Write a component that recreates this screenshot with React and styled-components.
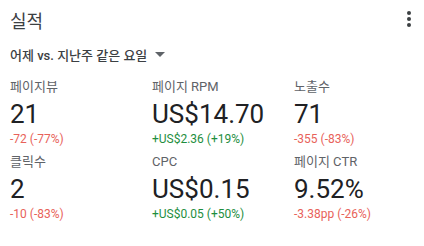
import { createGlobalStyle, styled } from "styled-components";

const GlobalStyle = createGlobalStyle`
    body {
        margin: 0;
        background: #fff;
        font-family: Roboto, "Noto Sans CJK KR", sans-serif;
    }
`

const Card = styled.div`
    width: 424px;
    height: 246px;
    box-sizing: border-box;
    padding: 7px 10px 0 10px;
    background: #fff;
`
const Header = styled.div`
    display: flex;
    justify-content: space-between;
    align-items: center;
    height: 26px;
`
const Title = styled.h2`
    margin: 0;
    font-size: 18px;
    font-weight: 400;
    color: #3c4043;
`
const MoreButton = styled.div`
    display: flex;
    flex-direction: column;
    gap: 2px;
    margin-right: 3px;
    margin-top: -2px;
`
const Dot = styled.span`
    width: 4px;
    height: 4px;
    border-radius: 50%;
    background: #3c4043;
`
const Range = styled.div`
    display: flex;
    align-items: center;
    gap: 8px;
    margin-top: 12px;
    font-size: 13px;
    font-weight: 500;
    color: #3c4043;
`
const Caret = styled.span`
    width: 0;
    height: 0;
    border-left: 5px solid transparent;
    border-right: 5px solid transparent;
    border-top: 5px solid #5f6368;
`
const Grid = styled.div`
    display: grid;
    grid-template-columns: 142px 142px 1fr;
    row-gap: 8px;
    margin-top: 15px;
`
const Metric = styled.div`
    display: flex;
    flex-direction: column;
`
const Label = styled.div`
    font-size: 13px;
    color: #5f6368;
    line-height: 16px;
`
const Value = styled.div`
    font-size: 26px;
    color: #202124;
    line-height: 30px;
    margin-top: 4px;
`
const Change = styled.div`
    font-size: 12px;
    line-height: 14px;
    margin-top: 3px;
    color: ${props => props.$up ? "#1e8e3e" : "#e8625a"};
`

const metrics = [
    { label: "페이지뷰", value: "21", change: "-72 (-77%)", up: false },
    { label: "페이지 RPM", value: "US$14.70", change: "+US$2.36 (+19%)", up: true },
    { label: "노출수", value: "71", change: "-355 (-83%)", up: false },
    { label: "클릭수", value: "2", change: "-10 (-83%)", up: false },
    { label: "CPC", value: "US$0.15", change: "+US$0.05 (+50%)", up: true },
    { label: "페이지 CTR", value: "9.52%", change: "-3.38pp (-26%)", up: false },
]

export default function App() {
    return <>
        <GlobalStyle />
        <Card>
            <Header>
                <Title>실적</Title>
                <MoreButton>
                    <Dot />
                    <Dot />
                    <Dot />
                </MoreButton>
            </Header>
            <Range>
                어제 vs. 지난주 같은 요일
                <Caret />
            </Range>
            <Grid>
                {metrics.map(m => <Metric key={m.label}>
                    <Label>{m.label}</Label>
                    <Value>{m.value}</Value>
                    <Change $up={m.up}>{m.change}</Change>
                </Metric>)}
            </Grid>
        </Card>
    </>
}
